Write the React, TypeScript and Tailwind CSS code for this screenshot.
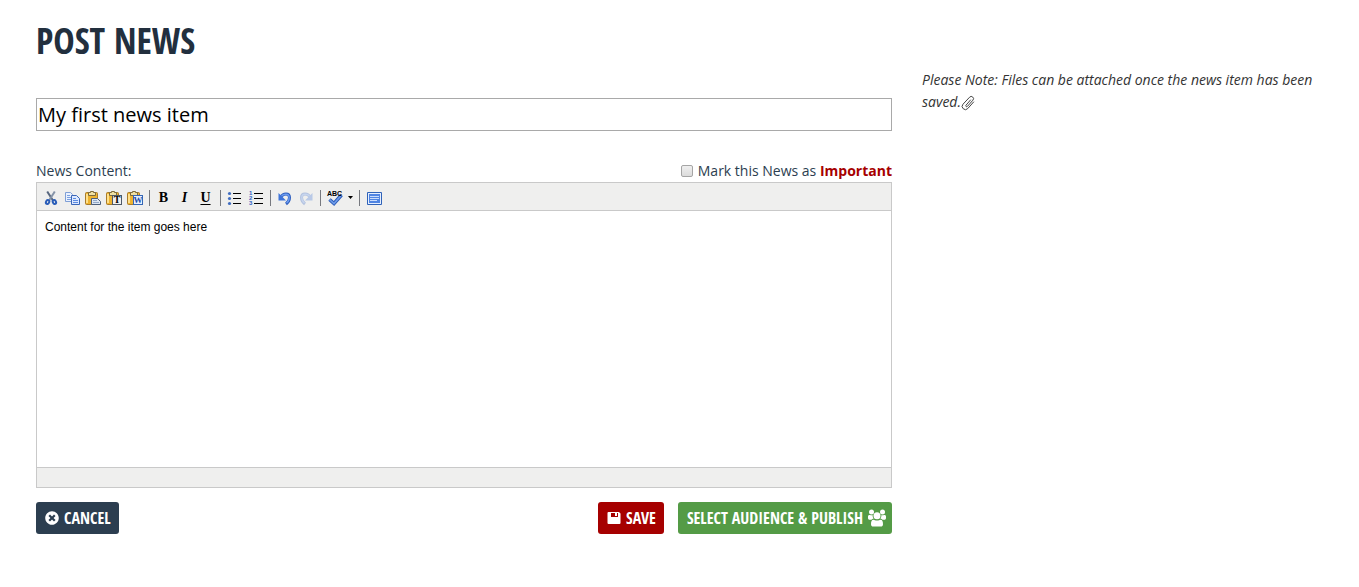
import { useState, type ReactNode } from "react";
import { FaTimesCircle } from "react-icons/fa";

const condensed =
  "font-['Open_Sans_Condensed','Open_Sans_Condensed_Bold','Noto_Sans_Condensed','Roboto_Condensed','Open_Sans',sans-serif] font-bold uppercase";

function CutIcon() {
  return (
    <svg viewBox="0 0 16 16" className="size-4" fill="none">
      <path d="M4.2 1.5L10 10.5" stroke="#56657d" strokeWidth="2" />
      <path d="M11.8 1.5L6 10.5" stroke="#8593a8" strokeWidth="2" />
      <ellipse cx="4.6" cy="12" rx="1.6" ry="2" stroke="#2a5db8" strokeWidth="2" transform="rotate(25 4.6 12)" />
      <ellipse cx="11.4" cy="12" rx="1.6" ry="2" stroke="#2a5db8" strokeWidth="2" transform="rotate(-25 11.4 12)" />
    </svg>
  );
}

function CopyIcon() {
  return (
    <svg viewBox="0 0 16 16" className="size-4">
      <path d="M1.5 2.5h5l2 2v7h-7z" fill="#e9f1ff" stroke="#7f9fd6" />
      <path d="M3 5.5h3M3 7.5h4M3 9.5h4" stroke="#7ba0e0" />
      <path d="M7.5 5.5h5l3 3v6h-8z" fill="#dce8ff" stroke="#3a66b8" />
      <path d="M9 8.5h3M9 10.5h5M9 12.5h5" stroke="#5c8be0" />
    </svg>
  );
}

function Clipboard({ children }: { children: ReactNode }) {
  return (
    <svg viewBox="0 0 16 16" className="size-4">
      <rect x="0.5" y="2.5" width="12" height="12" rx="1" fill="#eeb330" stroke="#a87b2a" />
      <path d="M2 4v9" stroke="#ffe08a" strokeWidth="2" />
      <path d="M3.5 5.5v-3h2v-1h3v1h2v3z" fill="#efe0a4" stroke="#7d6a3a" />
      {children}
    </svg>
  );
}

function PasteIcon() {
  return (
    <Clipboard>
      <path d="M6.5 8.5h6l3 3v3h-9z" fill="#dde6f2" stroke="#4d5f7a" />
      <path d="M8 10.5h4M8 12.5h6" stroke="#93a9c8" />
    </Clipboard>
  );
}

function PasteTextIcon() {
  return (
    <Clipboard>
      <rect x="6.5" y="5.5" width="9" height="9" fill="#f0f0f0" stroke="#4f5a68" />
      <text x="11" y="13" textAnchor="middle" className="fill-black font-['Liberation_Serif',serif] text-[10px] font-bold">
        T
      </text>
    </Clipboard>
  );
}

function PasteWordIcon() {
  return (
    <Clipboard>
      <rect x="6.5" y="5.5" width="9" height="9" fill="#e6efff" stroke="#3566b5" />
      <text x="11" y="13" textAnchor="middle" className="fill-[#1f4fa8] font-['Liberation_Serif',serif] text-[9px] font-bold">
        W
      </text>
    </Clipboard>
  );
}

function BulletsIcon() {
  return (
    <svg viewBox="0 0 16 16" className="size-4">
      <g fill="#3f6cc0">
        <circle cx="2.5" cy="3.5" r="1.6" />
        <circle cx="2.5" cy="8.5" r="1.6" />
        <circle cx="2.5" cy="13.5" r="1.6" />
      </g>
      <path d="M6 3.5h8M6 8.5h8M6 13.5h8" stroke="#000" />
    </svg>
  );
}

function NumbersIcon() {
  return (
    <svg viewBox="0 0 16 16" className="size-4">
      <g className="fill-[#2f62c4] font-['Liberation_Sans',sans-serif] text-[6px] font-bold">
        <text x="1" y="5">1</text>
        <text x="1" y="10">2</text>
        <text x="1" y="15">3</text>
      </g>
      <path d="M6 3.5h9M6 8.5h9M6 13.5h9" stroke="#000" />
    </svg>
  );
}

function UndoIcon() {
  return (
    <svg viewBox="0 0 16 16" className="size-4">
      <path d="M4 7C6 3 12.5 2.5 12.5 7.5C12.5 10.5 11 12.5 9 14" fill="none" stroke="#2e5fbf" strokeWidth="3" />
      <path d="M4 7C6 3.5 12.2 3 12.2 7.5C12.2 10 11 12 9.5 13" fill="none" stroke="#6d9cf0" strokeWidth="1.3" />
      <path d="M1.5 3v7.5h7.5z" fill="#3f74d8" />
    </svg>
  );
}

function SpellIcon() {
  return (
    <svg viewBox="0 0 18 18" className="size-[18px]">
      <path d="M3.5 10.5l4.5 4 7.5-8.5" fill="none" stroke="#2c5cb8" strokeWidth="3.6" />
      <path d="M3.5 10.5l4.5 4 7.5-8.5" fill="none" stroke="#6f9cea" strokeWidth="1.6" />
      <text x="1" y="7" className="fill-black font-['Liberation_Sans',sans-serif] text-[7px] font-bold">
        ABC
      </text>
    </svg>
  );
}

function MaximizeIcon() {
  return (
    <svg viewBox="0 0 16 16" className="size-4">
      <rect x="1" y="2" width="15" height="13" rx="1" fill="#2f62b8" />
      <rect x="2" y="3" width="13" height="11" fill="#e4eeff" />
      <rect x="3" y="4" width="11" height="9" fill="#4f84e2" />
      <path d="M4 6.5h9M4 8.5h9M4 10.5h7" stroke="#c9dcfb" />
    </svg>
  );
}

function SaveIcon() {
  return (
    <svg viewBox="0 0 14 14" className="size-3.5" fill="currentColor" fillRule="evenodd">
      <path d="M1.5 1H12l1.5 1.5V12a1 1 0 0 1-1 1h-11a1 1 0 0 1-1-1V2a1 1 0 0 1 1-1zM4 2v4h7V2zM8 2h2v3H8z" />
    </svg>
  );
}

function UsersIcon() {
  return (
    <svg viewBox="0 0 18 18" className="size-[18px]" fill="currentColor">
      <circle cx="3.5" cy="3" r="2.5" />
      <circle cx="14.5" cy="3" r="2.5" />
      <path d="M0 9V7.5C0 6.2 1 5.6 2 6c1 .4 1.800.4 2.600.1C4.500 7.600 4.900 8.700 5.600 9.600 4.700 9.700 4 10.100 3.400 10.800H1.800C.6 10.800 0 10.200 0 9z" />
      <path d="M18 9V7.500C18 6.200 17 5.600 16 6c-1 .4-1.800.4-2.600.1.1 1.500-.3 2.600-1 3.500.9.1 1.600.5 2.200 1.200h1.600c1.200 0 1.800-.6 1.800-1.800z" />
      <circle cx="9" cy="6.8" r="3.500" />
      <path d="M3 15.200c0-2.700.7-4.400 2.400-4.400 1.200 0 1.800.8 3.600.8s2.400-.8 3.600-.8c1.700 0 2.400 1.700 2.400 4.400 0 1.500-.9 2.300-2.200 2.300H5.200C3.900 17.500 3 16.700 3 15.200z" />
    </svg>
  );
}

function ClipIcon() {
  return (
    <svg viewBox="0 0 14 16" className="inline-block h-4 w-3.5" fill="none" strokeLinecap="round" strokeLinejoin="round">
      <path
        d="M9.5 5L5 10.200a.9.9 0 0 0 1.400 1.200L11.900 5.200a2.200 2.200 0 0 0-3.300-3L2 9.200a3.200 3.200 0 0 0 4.800 4.300L12.600 7"
        stroke="#444"
        strokeWidth="1"
      />
    </svg>
  );
}

function ToolButton({ label, children }: { label: string; children: ReactNode }) {
  return (
    <button type="button" aria-label={label} className="flex h-5 w-[21px] items-center justify-center">
      {children}
    </button>
  );
}

function Separator() {
  return <span className="mr-[3px] ml-1 h-4 w-px bg-[#77797f]" />;
}

const letter = "font-['Liberation_Serif',serif] text-sm leading-none font-bold text-black";

export default function App() {
  const [title, setTitle] = useState("My first news item");
  const [content, setContent] = useState("Content for the item goes here");
  const [important, setImportant] = useState(false);

  return (
    <main className="flex bg-white pr-[9px] pl-[21px] font-['Open_Sans',sans-serif] text-sm text-[#2c3e50]">
      <form className="w-2/3 px-[15px] pt-4" onSubmit={(e) => e.preventDefault()}>
        <h1 className={`${condensed} text-4xl leading-[50px] text-[#222f3e]`}>Post News</h1>

        <input
          type="text"
          aria-label="News title"
          value={title}
          onChange={(e) => setTitle(e.target.value)}
          className="mt-8 block h-[33px] w-full border border-[#a9a9a9] px-px text-xl text-black outline-none"
        />

        <div className="mt-[29px] flex h-[22px] items-center justify-between">
          <label htmlFor="content">News Content:</label>
          <label className="flex items-center">
            <input
              type="checkbox"
              checked={important}
              onChange={(e) => setImportant(e.target.checked)}
              className="mr-[5px] size-3 appearance-none rounded-xs border border-[#a5a5a5] bg-linear-to-b from-[#efefef] to-[#dcdcdc] checked:bg-[#2c3e50]"
            />
            <span>
              Mark this News as <strong className="text-[#a60000]">Important</strong>
            </span>
          </label>
        </div>

        <div className="border border-[#c9c9c9]">
          <div className="flex h-7 items-center border-b border-[#c9c9c9] bg-[#efefee] pt-0.5 pl-[3px]">
            <ToolButton label="Cut"><CutIcon /></ToolButton>
            <ToolButton label="Copy"><CopyIcon /></ToolButton>
            <ToolButton label="Paste"><PasteIcon /></ToolButton>
            <ToolButton label="Paste as plain text"><PasteTextIcon /></ToolButton>
            <ToolButton label="Paste from Word"><PasteWordIcon /></ToolButton>
            <Separator />
            <ToolButton label="Bold"><span className={letter}>B</span></ToolButton>
            <ToolButton label="Italic"><span className={`${letter} italic`}>I</span></ToolButton>
            <ToolButton label="Underline"><span className={`${letter} underline underline-offset-2`}>U</span></ToolButton>
            <Separator />
            <ToolButton label="Bulleted list"><BulletsIcon /></ToolButton>
            <ToolButton label="Numbered list"><NumbersIcon /></ToolButton>
            <Separator />
            <ToolButton label="Undo"><UndoIcon /></ToolButton>
            <ToolButton label="Redo">
              <span className="-scale-x-100 opacity-30"><UndoIcon /></span>
            </ToolButton>
            <Separator />
            <ToolButton label="Spell check"><SpellIcon /></ToolButton>
            <button type="button" aria-label="Spell check options" className="flex h-5 w-2.5 items-center justify-center">
              <svg viewBox="0 0 5 3" className="h-[3px] w-[5px]"><path d="M0 0h5L2.5 3z" /></svg>
            </button>
            <Separator />
            <ToolButton label="Full screen"><MaximizeIcon /></ToolButton>
          </div>
          <textarea
            id="content"
            rows={15}
            value={content}
            onChange={(e) => setContent(e.target.value)}
            className="block w-full resize-none p-2 font-['Liberation_Sans',Arial,sans-serif] text-xs leading-4 text-black outline-none"
          />
          <div className="h-5 border-t border-[#c9c9c9] bg-[#efefee]" />
        </div>

        <div className="mt-3.5 flex items-center gap-3.5 text-white">
          <button type="button" className={`${condensed} mr-auto flex h-8 items-center gap-[5px] rounded-[3px] bg-[#2c3e50] pr-2 pl-[9px] text-base`}>
            <FaTimesCircle className="size-3.5" />
            Cancel
          </button>
          <button type="submit" className={`${condensed} flex h-8 items-center gap-[5px] rounded-[3px] bg-[#a60000] pr-2 pl-[9px] text-base`}>
            <SaveIcon />
            Save
          </button>
          <button type="button" className={`${condensed} flex h-8 items-center gap-[5px] rounded-[3px] bg-[#549b46] pr-1.5 pl-[9px] text-base`}>
            Select Audience &amp; Publish
            <UsersIcon />
          </button>
        </div>
      </form>

      <aside className="w-1/3 px-[15px] pt-[69px]">
        <p className="leading-[22px] text-[#333] italic">
          Please Note: Files can be attached once the news item has been saved.
          <ClipIcon />
        </p>
      </aside>
    </main>
  );
}
